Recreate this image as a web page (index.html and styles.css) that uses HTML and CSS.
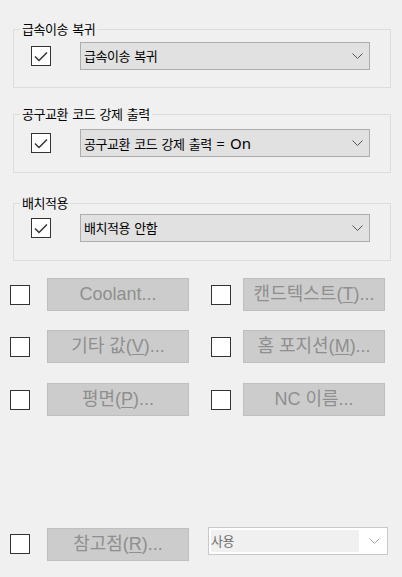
FILE: index.html
```html
<!DOCTYPE html>
<html lang="ko">
<head>
<meta charset="utf-8">
<title>옵션</title>
<link rel="stylesheet" href="styles.css">
</head>
<body>
<div class="panel">
  <fieldset class="group g1">
    <legend>급속이송 복귀</legend>
    <div class="grow">
      <span class="cb"><svg class="tick" width="18" height="18" viewBox="0 0 18 18"><path d="M3 9.5 L7 13.5 L15 5.5"/></svg></span>
      <div class="combo"><span class="combo-text">급속이송 복귀</span><svg class="chev" width="11" height="6" viewBox="0 0 11 6"><path d="M0.5 0.5 L5.5 5.5 L10.5 0.5"/></svg></div>
    </div>
  </fieldset>

  <fieldset class="group g2">
    <legend>공구교환 코드 강제 출력</legend>
    <div class="grow">
      <span class="cb"><svg class="tick" width="18" height="18" viewBox="0 0 18 18"><path d="M3 9.5 L7 13.5 L15 5.5"/></svg></span>
      <div class="combo"><span class="combo-text">공구교환 코드 강제 출력 <span class="latin">= On</span></span><svg class="chev" width="11" height="6" viewBox="0 0 11 6"><path d="M0.5 0.5 L5.5 5.5 L10.5 0.5"/></svg></div>
    </div>
  </fieldset>

  <fieldset class="group g3">
    <legend>배치적용</legend>
    <div class="grow">
      <span class="cb"><svg class="tick" width="18" height="18" viewBox="0 0 18 18"><path d="M3 9.5 L7 13.5 L15 5.5"/></svg></span>
      <div class="combo"><span class="combo-text">배치적용 안함</span><svg class="chev" width="11" height="6" viewBox="0 0 11 6"><path d="M0.5 0.5 L5.5 5.5 L10.5 0.5"/></svg></div>
    </div>
  </fieldset>

  <div class="opts">
    <div class="opt-row">
      <span class="cb"></span>
      <button class="btn">Coolant...</button>
      <span class="cb cb-r"></span>
      <button class="btn btn-r">캔드텍스트(<u>T</u>)...</button>
    </div>
    <div class="opt-row">
      <span class="cb"></span>
      <button class="btn">기타 값(<u>V</u>)...</button>
      <span class="cb cb-r"></span>
      <button class="btn btn-r">홈 포지션(<u>M</u>)...</button>
    </div>
    <div class="opt-row row3">
      <span class="cb"></span>
      <button class="btn">평면(<u>P</u>)...</button>
      <span class="cb cb-r"></span>
      <button class="btn btn-r">NC 이름...</button>
    </div>
  </div>

  <div class="bottom">
    <span class="cb cb-b"></span>
    <button class="btn btn-b">참고점(<u>R</u>)...</button>
    <div class="combo2">
      <span class="field">사용</span>
      <svg class="chev2" width="11" height="6" viewBox="0 0 11 6"><path d="M0.5 0.5 L5.5 5.5 L10.5 0.5"/></svg>
    </div>
  </div>
</div>
</body>
</html>
```

FILE: styles.css
```css
html, body {
  margin: 0;
  padding: 0;
  background: #f0f0f0;
}

.panel {
  padding-top: 22px;
  font-family: "Noto Sans", "Noto Sans CJK KR", sans-serif;
  font-size: 13px;
  letter-spacing: -0.5px;
  word-spacing: 1.5px;
  color: #000;
}

.group {
  box-sizing: border-box;
  width: 378px;
  margin: 0 0 0 13px;
  padding: 0;
  border: 1px solid #dcdcdc;
  min-inline-size: 0;
}

.group legend {
  margin-left: 6px;
  padding: 0 2px;
  font-size: 13px;
  line-height: 15px;
  height: 15px;
}

.grow {
  display: flex;
  align-items: center;
  margin-left: 17px;
}

.g1 { padding-bottom: 17px; }
.g1 .grow { margin-top: 5px; }
.g2 { margin-top: 19px; padding-bottom: 15px; }
.g2 .grow { margin-top: 7px; }
.g3 { margin-top: 23px; padding-bottom: 18px; }
.g3 .grow { margin-top: 3px; }

.cb {
  box-sizing: border-box;
  width: 20px;
  height: 20px;
  flex: none;
  border: 1px solid #333333;
  background: #ffffff;
  display: block;
}

.tick {
  display: block;
}
.tick path {
  fill: none;
  stroke: #333333;
  stroke-width: 1.5;
}

.combo {
  box-sizing: border-box;
  margin-left: 29px;
  width: 290px;
  height: 28px;
  border: 1px solid #adadad;
  background: #e1e1e1;
  display: flex;
  align-items: center;
  padding-left: 3px;
}

.combo-text {
  flex: 1;
  line-height: 26px;
  white-space: nowrap;
}

.latin {
  font-size: 15px;
  letter-spacing: 0;
}

.chev {
  margin-right: 6px;
  display: block;
}
.chev path {
  fill: none;
  stroke: #555555;
  stroke-width: 1;
}

.opts {
  margin-top: 17px;
  padding-left: 10px;
  display: flex;
  flex-direction: column;
  gap: 19px;
}

.opt-row {
  display: flex;
  align-items: center;
}
.row3 { margin-top: 1px; }

.btn {
  box-sizing: border-box;
  width: 142px;
  height: 33px;
  margin: 0 0 0 17px;
  padding: 0;
  border: 1px solid #bfbfbf;
  background: #cccccc;
  color: #8f8f8f;
  font-family: "Liberation Sans", "Noto Sans CJK KR", sans-serif;
  font-size: 18px;
  letter-spacing: 0;
  word-spacing: 0;
  line-height: 31px;
  text-align: center;
  white-space: nowrap;
  flex: none;
}

.btn u {
  text-underline-offset: 2px;
}

.cb-r { margin-left: 22px; }
.btn-r { margin-left: 12px; }

.bottom {
  margin-top: 111px;
  padding-left: 10px;
  display: flex;
  align-items: flex-start;
}

.cb-b { margin-top: 7px; }
.btn-b { margin-top: 1px; }

.combo2 {
  box-sizing: border-box;
  margin-left: 19px;
  width: 180px;
  height: 28px;
  border: 1px solid #c8c8c8;
  background: #ffffff;
  padding: 2px;
  display: flex;
  align-items: center;
}

.field {
  width: 148px;
  height: 22px;
  line-height: 22px;
  background: #f0f0f0;
  color: #6e6e6e;
  white-space: nowrap;
}

.chev2 {
  margin-left: 10px;
  display: block;
}
.chev2 path {
  fill: none;
  stroke: #a6a6a6;
  stroke-width: 1;
}
```
